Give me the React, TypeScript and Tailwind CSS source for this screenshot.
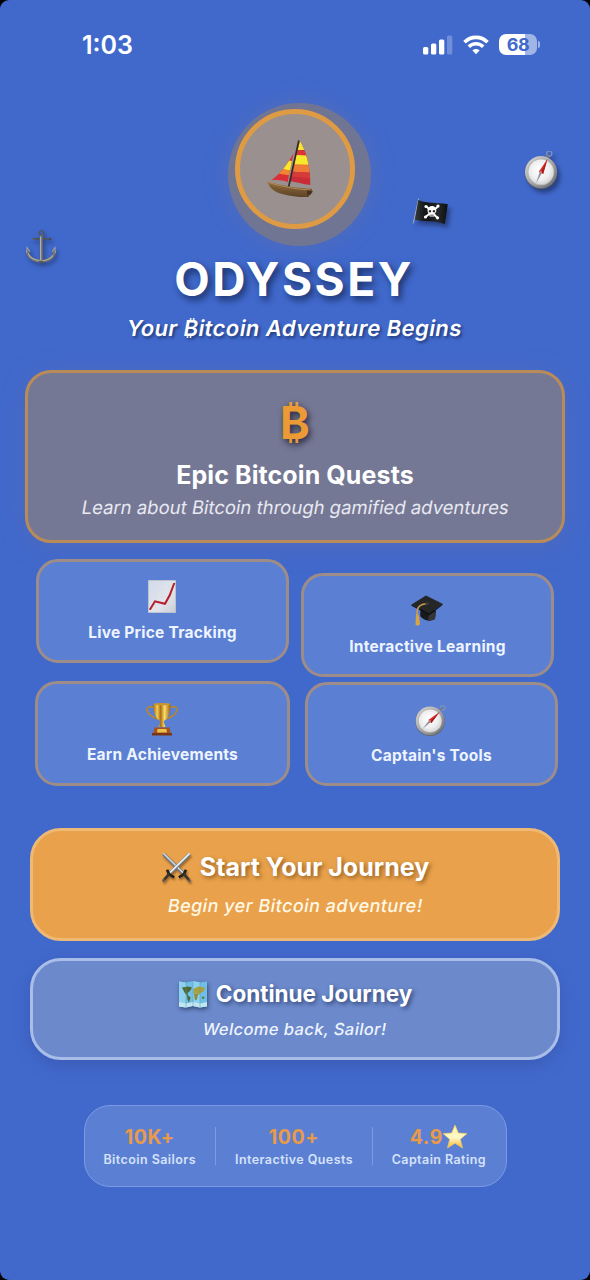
import type { ReactNode } from "react";

function Anchor() {
  return (
    <svg viewBox="0 0 32 38" className="h-[36px] w-8 drop-shadow-[2px_3px_2px_rgba(20,30,60,0.55)]" fill="none">
      <circle cx="16.5" cy="4" r="2.300" stroke="#4c5663" strokeWidth="1.500" />
      <path d="M8 10.500h17.500" stroke="#4c545f" strokeWidth="1.800" strokeLinecap="round" />
      <circle cx="7.600" cy="10.500" r="1.300" fill="#5a6474" />
      <circle cx="25.800" cy="10.500" r="1.300" fill="#454d58" />
      <path d="M16.300 6v28" stroke="#666a6d" strokeWidth="3.400" />
      <path d="M15.600 8v25" stroke="#b3b2a6" strokeWidth="1.300" />
      <path d="M1.500 22.500c.5 7.500 6.500 11 14.500 11.500 8-.5 14-4 14.500-11.500" stroke="#74766f" strokeWidth="2.600" />
      <path d="M2.500 26c2 5 7 7 13.500 7.500 6 0 10-2 12.500-5.500" stroke="#bbb79f" strokeWidth="1.100" />
      <path d="M.8 25.500l.5-6 3 4.500M31.200 25.500l-.5-6-3 4.500" stroke="#a3a294" strokeWidth="1.100" />
      <path d="M13 33.500l3.500 3.500L19 33.500z" fill="#55585a" />
    </svg>
  );
}

function Compass({ className, spin }: { className: string; spin: number }) {
  return (
    <svg viewBox="0 0 40 40" className={className} fill="none">
      <defs>
        <linearGradient id="rim" x1="0" y1="0" x2="1" y2="1">
          <stop offset="0" stopColor="#d9d9d9" />
          <stop offset="0.500" stopColor="#a5a7aa" />
          <stop offset="1" stopColor="#63666b" />
        </linearGradient>
        <radialGradient id="face" cx="0.450" cy="0.400" r="0.600">
          <stop offset="0" stopColor="#ffffff" />
          <stop offset="0.700" stopColor="#eeeef0" />
          <stop offset="1" stopColor="#d4d5d8" />
        </radialGradient>
      </defs>
      <g transform={`rotate(${spin} 19 21)`}>
        <circle cx="33" cy="6.500" r="2.600" stroke="#8193b5" strokeWidth="1.300" />
        <path d="M29 10l3-3" stroke="#777b84" strokeWidth="2.500" />
      </g>
      <circle cx="19" cy="21.600" r="16.300" fill="#5d6067" />
      <circle cx="19" cy="21" r="16" fill="url(#rim)" />
      <circle cx="19" cy="21" r="13.300" fill="#b9b5b0" />
      <circle cx="19" cy="21" r="12.500" fill="url(#face)" />
      <circle cx="19" cy="21" r="10.500" stroke="#dcdcdc" strokeWidth="0.700" strokeDasharray="1 1.500" />
      <g transform={`rotate(${spin} 19 21)`}>
        <path d="M17.700 20.500l2 1.600L10.500 30z" fill="#8f9298" />
        <path d="M17 20l3.500 3.400L29.500 11z" fill="#de2b2b" />
        <path d="M18.600 21.600l1.900 1.800L29.500 11z" fill="#a91e22" />
      </g>
      <circle cx="19" cy="21" r="1" fill="#bb8a86" />
    </svg>
  );
}

function PirateFlag() {
  return (
    <svg viewBox="0 0 38 32" className="h-8 w-[38px] drop-shadow-[3px_4px_2px_rgba(15,25,60,0.500)]">
      <defs>
        <linearGradient id="cloth" x1="0" x2="1">
          <stop offset="0" stopColor="#35393a" />
          <stop offset="0.350" stopColor="#111314" />
          <stop offset="0.700" stopColor="#25282a" />
          <stop offset="1" stopColor="#0c0e0f" />
        </linearGradient>
      </defs>
      <path d="M6.600 2L1.300 26" stroke="#9ea9ad" strokeWidth="1.100" strokeLinecap="round" />
      <path d="M6.300 3c9 3.600 17 2.200 29.500 4.200l-3 19.700C21 23 14 25.500 3 22.500z" fill="url(#cloth)" />
      <path d="M14.500 9.500l10.500 11M26 9.500L13.500 20" stroke="#fff" strokeWidth="1.900" />
      <g fill="#fff">
        <circle cx="14" cy="9.500" r="1.600" />
        <circle cx="26" cy="9" r="1.600" />
        <circle cx="13.500" cy="20" r="1.600" />
        <circle cx="25.500" cy="20.800" r="1.600" />
        <path d="M15.500 13.500c0-6 9-6 8.800 0 0 2-1 2.600-1.700 3l-.5 3h-4.500l-.5-3c-1-.4-1.600-1.400-1.600-3z" />
      </g>
      <path d="M16.800 13.200h2.300v2h-2.300zM20.800 13.200h2.300v2h-2.300zM18.200 17.800h3.500v.7h-3.500z" fill="#222" />
    </svg>
  );
}

function Sailboat() {
  return (
    <svg viewBox="0 0 48 60" className="h-[60px] w-12">
      <defs>
        <linearGradient id="hull" x1="0" y1="0" x2="0" y2="1">
          <stop offset="0" stopColor="#94703f" />
          <stop offset="1" stopColor="#5c4226" />
        </linearGradient>
        <clipPath id="jib">
          <path d="M26.500 13C21 24 13 34 4.300 40.300c6-.8 12 0 16.400 1.700z" />
        </clipPath>
        <clipPath id="main">
          <path d="M33 1L22.700 41c6.500 1 13 3.300 20.600 4C43.500 28 39.500 12 33 1z" />
        </clipPath>
      </defs>
      <g clipPath="url(#jib)">
        <path d="M0 0h48v60H0z" fill="#d92f38" />
        <path d="M12 19l20 3-2 9.500-20-3z" fill="#f8e72a" />
        <path d="M5 27.500l22 3.500v5l-23-3.500z" fill="#f08632" />
      </g>
      <g clipPath="url(#main)">
        <path d="M0 0h48v60H0z" fill="#c92c37" />
        <path d="M25 0h20v10H25z" fill="#f6e636" />
        <path d="M25 9.500l20 2v5H25z" fill="#dc3438" />
        <path d="M20 14.500l28 1.500v9H20z" fill="#f8e82b" />
        <path d="M20 24l28 1v8l-28-1.500z" fill="#ee7a37" />
        <path d="M20 31.500l28 1.500v6l-28-3z" fill="#d63a39" />
      </g>
      <path d="M31.700 1.200L21.300 48.500" stroke="#362a24" strokeWidth="1.700" strokeLinecap="round" />
      <path d="M0 41.500c8 2.300 16 3.800 23 5.200 8 1.400 15 1.600 21.500 2l1.300 3-4.500 5.300c-8 .5-17-.8-25-2.800C8 52.500 2.500 48 0 41.500z" fill="url(#hull)" />
      <path d="M.5 42c9 3.300 18 4.800 25 6.100 7 1.200 12 1.400 17.500 1.700" stroke="#b98f59" strokeWidth="0.900" fill="none" />
      <path d="M3 46c9 5 22 8 38 8.500" stroke="#6c4e2c" strokeWidth="0.800" fill="none" />
      <path d="M40 50l5.500 1.500-2 3-3.500.5z" fill="#443322" />
    </svg>
  );
}

function ChartIcon() {
  return (
    <svg viewBox="0 0 28 33" className="h-[33px] w-7">
      <defs>
        <linearGradient id="paper" x1="0" y1="0" x2="1" y2="1">
          <stop offset="0" stopColor="#cfdaea" />
          <stop offset="0.600" stopColor="#e3e6ec" />
          <stop offset="1" stopColor="#c9ccd2" />
        </linearGradient>
      </defs>
      <path d="M.5.500h27v32H.5z" fill="url(#paper)" stroke="#bcc5cf" />
      <path d="M7.500 1v31M14 1v31M20.500 1v31M1 8.500h26M1 16.500h26M1 24.500h26" stroke="#d8dde4" strokeWidth="0.500" />
      <path d="M1.800 29.800L7 21.300l10 2.500 4.800-8.800L26.300 3" fill="none" stroke="#b51d2a" strokeWidth="2" />
    </svg>
  );
}

function CapIcon() {
  return (
    <svg viewBox="0 0 32 33" className="h-[33px] w-8">
      <path d="M9.500 14.500l-.3 7.500c2.500 4 9 6.500 14.800 3l1-8.500z" fill="#191a1b" />
      <path d="M17 26.500c3 .2 5.500-.5 7-1.700l.8-7.500-6.800 3z" fill="#343638" />
      <path d="M.5 10.500L15 1.500l16.500 8.200L18.300 19.600z" fill="#242628" />
      <path d="M.5 10.500l17.800 9.100L31.500 9.700v1.200L18.300 21.200.5 11.800z" fill="#101112" />
      <path d="M16 9.500c-5 .5-9 2.800-9.700 6.500L6 22" fill="none" stroke="#c79b4b" strokeWidth="1.700" />
      <path d="M5 20.500l2.800.2L9 30c-1 1.800-3.500 2-4.500.8z" fill="#d9a441" />
      <ellipse cx="16" cy="9.700" rx="2" ry="1.100" fill="#3f4143" />
    </svg>
  );
}

function Trophy() {
  return (
    <svg viewBox="0 0 32 34" className="h-[34px] w-8">
      <defs>
        <linearGradient id="gold" x1="0" x2="1">
          <stop offset="0" stopColor="#a96f12" />
          <stop offset="0.220" stopColor="#f5cf55" />
          <stop offset="0.420" stopColor="#a96f15" />
          <stop offset="0.650" stopColor="#fbdc6c" />
          <stop offset="1" stopColor="#9c5f0d" />
        </linearGradient>
      </defs>
      <path d="M8 5.500C3 3.500.5 5.500 1 8c.8 4 4.800 7 11 9M24 5.500c5-2 7.500 0 7 2.500-.8 4-4.800 7-11 9" fill="none" stroke="#b98727" strokeWidth="1.500" />
      <path d="M7.500 2h17c0 9-2 14-6 16.500-.8.600-.7 1.500-.5 2.500l1.500 4h-7l1.500-4c.2-1 .3-1.900-.5-2.500-4-2.500-6-7.500-6-16.500z" fill="url(#gold)" />
      <ellipse cx="16" cy="2.200" rx="8.500" ry="1.200" fill="#c8962d" />
      <path d="M8.500 25.500h15l1.200 5.500H7.300z" fill="#a1551c" />
      <path d="M11.500 27h9l.4 3.500h-9.800z" fill="#eec04a" />
      <path d="M6 31h20v2.500H6z" fill="#7b3516" />
    </svg>
  );
}

function Swords() {
  return (
    <svg viewBox="0 0 32 34" className="h-[32px] w-[31px] drop-shadow-[1px_2px_1px_rgba(60,30,10,0.500)]" fill="none">
      <path d="M2 3l20.500 20" stroke="#6c7b8c" strokeWidth="3.400" />
      <path d="M2 2.500L23 23" stroke="#d5dee6" strokeWidth="1.500" />
      <path d="M30 3L9.500 23" stroke="#6c7b8c" strokeWidth="3.400" />
      <path d="M30 2.500L9 23" stroke="#e8eff5" strokeWidth="1.900" />
      <path d="M6 20l2 4.500 5.500 3.500M26 20l-2 4.500-5.500 3.500" stroke="#20201f" strokeWidth="2.800" />
      <path d="M8.500 24L2.500 31M23.500 24l6 7" stroke="#3c332a" strokeWidth="2.800" />
      <circle cx="2.300" cy="31.300" r="1.600" fill="#625b55" />
      <circle cx="29.700" cy="31.300" r="1.600" fill="#625b55" />
    </svg>
  );
}

function MapIcon() {
  return (
    <svg viewBox="0 0 30 29" className="h-[29px] w-[30px] drop-shadow-[1px_2px_2px_rgba(15,25,60,0.550)]">
      <path d="M1 1.500l7 1 7-1.500 7 1.500 7-1v25l-7 1-7-1.500-7 1.500-7-1z" fill="#6fbfe6" />
      <path d="M1 1.500l7 1v25l-7-1zM15 1l7 1.500v25L15 26z" fill="#8dd1ed" />
      <path d="M1 22l7 1.500 7-1.500 7 1.500 7-1.500v4.500l-7 1-7-1.500-7 1.500-7-1z" fill="#c3e6ee" />
      <path d="M4 7.500l6-1 4 1-2 3.500L9.500 13l.5 2.500 2.500 2-1.500 5-1.500-3-.5-4-2.500-3z" fill="#50672f" />
      <path d="M15.500 9l4.500-2.500 7 1-1.500 4-3 1.500-1.500 2-3-2-2.500 1z" fill="#aca03d" />
      <path d="M16 13.500l4 .5-1 5.500-2 1z" fill="#8f8a3a" />
      <path d="M24 16.500l2.500.5-.5 2-2-.5z" fill="#5f7539" />
      <path d="M8 2.500v25M15 1v25M22 2.500v25" stroke="#4f9dc2" strokeWidth="0.500" />
    </svg>
  );
}

function Star() {
  return (
    <svg viewBox="0 0 26 25" className="-mt-[2px] -ml-px h-[25px] w-[26px]">
      <defs>
        <linearGradient id="star" x1="0" y1="0" x2="0" y2="1">
          <stop offset="0" stopColor="#fff3a6" />
          <stop offset="0.550" stopColor="#fff8c8" />
          <stop offset="1" stopColor="#f5b62f" />
        </linearGradient>
      </defs>
      <path d="M13 1l3.300 8 8.700.6-6.700 5.600L20.500 24 13 19.200 5.500 24l2.200-8.800L1 9.600 9.700 9z" fill="url(#star)" stroke="#f3c95c" strokeWidth="0.700" strokeLinejoin="round" />
    </svg>
  );
}

function Feature({ box, icon, label }: { box: string; icon: ReactNode; label: string }) {
  return (
    <div className={`flex flex-col items-center rounded-[22px] border-[3px] border-[#9e8c88] bg-[#5b80d3] ${box}`}>
      <div className="mt-[17px] flex h-9 items-center justify-center pr-px">{icon}</div>
      <span className="mt-2 h-5 text-[15.500px] leading-5 font-bold tracking-[0.250px] whitespace-nowrap text-[#eef4ff]">{label}</span>
    </div>
  );
}

function Stat({ value, label, width, children }: { value: string; label: string; width: string; children?: ReactNode }) {
  return (
    <div className={`flex flex-col items-center ${width}`}>
      <div className="flex h-[26px] items-center">
        <span className="text-[19.500px] leading-[26px] font-bold tracking-[0.600px] text-[#e99a48]">{value}</span>
        {children}
      </div>
      <span className="text-[12.500px] leading-5 font-semibold tracking-[0.430px] whitespace-nowrap text-[#d6e2fa]">{label}</span>
    </div>
  );
}

export default function App() {
  return (
    <div className="h-[1280px] w-[590px] overflow-hidden bg-black font-['Inter',sans-serif]">
      <div className="relative flex h-full flex-col items-center overflow-hidden rounded-[9px] bg-[#4169cc] text-white">
        <header className="flex h-[109px] w-full shrink-0 pt-[30px] pr-[50px] pl-[82px]">
          <span className="h-[30px] text-[25px] leading-[30px] font-semibold">1:03</span>
          <div className="ml-auto flex h-[29px] items-center">
            <svg viewBox="0 0 30 20" className="h-5 w-[30px]" fill="#fff">
              <rect x="0" y="12" width="5.300" height="7.500" rx="1.500" />
              <rect x="8" y="8.500" width="5.300" height="11" rx="1.500" />
              <rect x="16" y="4.500" width="5.300" height="15" rx="1.500" />
              <rect x="24" y="0.500" width="5.300" height="19" rx="1.500" opacity="0.250" />
            </svg>
            <svg viewBox="0 0 26 20" className="ml-[10px] h-5 w-[26px]" fill="none" stroke="#fff" strokeWidth="3.600">
              <path d="M1.500 7.200c6.400-6.400 16.600-6.400 23 0" />
              <path d="M5.800 11.700c4-4 10.400-4 14.400 0" />
              <path d="M13 19.300l-3.600-3.700c2-2 5.200-2 7.200 0z" fill="#fff" stroke="none" />
            </svg>
            <div className="ml-[10px] flex h-[21px] w-[38px] items-center justify-center rounded-[7px] bg-[linear-gradient(90deg,#fff_68%,#a0b4e6_68%)] text-[18px] leading-5 font-bold tracking-[-0.500px] text-[#4169cc]">68</div>
            <div className="ml-px h-[7px] w-[2px] rounded-r-full bg-[#a0b4e6]" />
          </div>
        </header>

        <div className="absolute top-[103px] left-[227.500px] h-[143px] w-[143px] rounded-full bg-[#6f7593] shadow-[0_0_24px_rgba(130,120,140,0.300)]" />
        <div className="absolute top-[229px] left-[25px]"><Anchor /></div>
        <div className="absolute top-[197px] left-[412px]"><PirateFlag /></div>
        <div className="absolute top-[151px] left-[522px]"><Compass className="h-10 w-10 drop-shadow-[3px_4px_2px_rgba(15,25,60,0.500)]" spin={-20} /></div>

        <div className="relative flex h-[120px] w-[120px] shrink-0 items-center justify-center rounded-full border-[5px] border-[#df9a44] bg-[#99908f]">
          <div className="mt-[2px] mr-[9px]"><Sailboat /></div>
        </div>
        <h1 className="relative mt-[20px] h-[60px] pr-[2px] text-[46px] leading-[60px] font-bold tracking-[2.500px] [text-shadow:3px_4px_7px_rgba(10,25,60,0.700)]">ODYSSEY</h1>
        <p className="relative mt-[4px] h-[31px] -skew-x-[10deg] text-[22px] leading-[31px] font-semibold tracking-[0.430px] whitespace-nowrap [text-shadow:2px_2px_3px_rgba(10,25,60,0.600)]">Your ₿itcoin Adventure Begins</p>

        <section className="mt-[26px] flex h-[173px] w-[540px] shrink-0 flex-col items-center rounded-[26px] border-[3px] border-[#b88b59] bg-[#757894] shadow-[0_4px_24px_rgba(110,110,160,0.350)]">
          <div className="mt-[20px] h-[60px] text-[45px] leading-[60px] font-bold text-[#ec9a35] [text-shadow:2px_3px_6px_rgba(20,20,40,0.800)]">₿</div>
          <h2 className="mt-[7px] h-[30px] text-[25px] leading-[30px] font-bold tracking-[0.100px] whitespace-nowrap">Epic Bitcoin Quests</h2>
          <p className="mt-[5px] h-6 -skew-x-[10deg] text-[18.500px] leading-6 whitespace-nowrap text-[#e8e9f2]">Learn about Bitcoin through gamified adventures</p>
        </section>

        <section className="mt-[15.500px] flex h-[229px] w-full shrink-0">
          <div className="flex w-[290px] flex-col pl-[35px]">
            <Feature box="ml-px h-[104px] w-[253px]" icon={<ChartIcon />} label="Live Price Tracking" />
            <Feature box="mt-[18.500px] h-[105px] w-[255px]" icon={<Trophy />} label="Earn Achievements" />
          </div>
          <div className="flex flex-col pt-[14px] pl-[11px]">
            <Feature box="h-[104px] w-[253px]" icon={<CapIcon />} label="Interactive Learning" />
            <Feature box="mt-[5px] ml-1 h-[104px] w-[253px]" icon={<Compass className="h-[36px] w-[36px]" spin={0} />} label="Captain's Tools" />
          </div>
        </section>

        <button className="mt-[40.500px] flex h-[113px] w-[530px] shrink-0 flex-col items-center rounded-[31px] border-[3px] border-[#eeb974] bg-[#e9a24b]">
          <span className="mt-[20px] flex h-8 items-center gap-2 text-[25px] leading-8 font-bold whitespace-nowrap [text-shadow:2px_2px_4px_rgba(90,50,10,0.600)]"><Swords /><span>Start Your Journey</span></span>
          <span className="mt-[11px] h-6 -skew-x-[10deg] text-[18px] leading-6 font-medium tracking-[0.450px] whitespace-nowrap text-[#fff8e6]">Begin yer Bitcoin adventure!</span>
        </button>

        <button className="mt-[17px] flex h-[102px] w-[530px] shrink-0 flex-col items-center rounded-[31px] border-[3px] border-[#a9bde9] bg-[#6b89cb] shadow-[0_5px_16px_rgba(50,70,150,0.400)]">
          <span className="mt-[17px] flex h-8 items-center gap-2 text-[22.500px] leading-8 font-bold whitespace-nowrap [text-shadow:2px_2px_4px_rgba(15,25,60,0.600)]"><MapIcon /><span>Continue Journey</span></span>
          <span className="mt-[7px] h-6 -skew-x-[10deg] text-[16.500px] leading-6 font-medium tracking-[0.400px] whitespace-nowrap text-[#eef4ff]">Welcome back, Sailor!</span>
        </button>

        <section className="mt-[45px] flex h-[82px] w-[423px] shrink-0 justify-center rounded-[26px] border-[1.500px] border-[#7c9ae4] bg-[#5b80d3] pt-[18px] pr-px">
          <Stat value="10K+" label="Bitcoin Sailors" width="w-[131px]" />
          <div className="mt-[3px] h-[38px] w-[1.500px] bg-[#7c9ae4]" />
          <Stat value="100+" label="Interactive Quests" width="w-[156px]" />
          <div className="mt-[3px] h-[38px] w-[1.500px] bg-[#7c9ae4]" />
          <Stat value="4.9" label="Captain Rating" width="w-[132px]"><Star /></Stat>
        </section>
      </div>
    </div>
  );
}
